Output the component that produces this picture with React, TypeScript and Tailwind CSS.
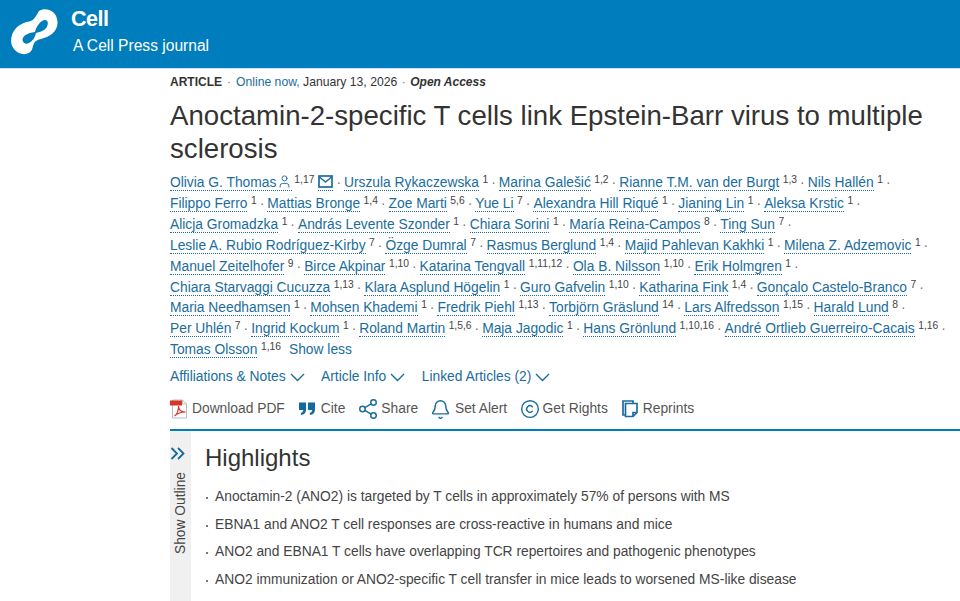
import { Share2, Bell, Copyright, User } from "lucide-react"

type Author = [string, string]

const authorLines: Author[][] = [
  [["Urszula Rykaczewska", "1"], ["Marina Galešić", "1,2"], ["Rianne T.M. van der Burgt", "1,3"], ["Nils Hallén", "1"]],
  [["Filippo Ferro", "1"], ["Mattias Bronge", "1,4"], ["Zoe Marti", "5,6"], ["Yue Li", "7"], ["Alexandra Hill Riqué", "1"], ["Jianing Lin", "1"], ["Aleksa Krstic", "1"]],
  [["Alicja Gromadzka", "1"], ["András Levente Szonder", "1"], ["Chiara Sorini", "1"], ["María Reina-Campos", "8"], ["Ting Sun", "7"]],
  [["Leslie A. Rubio Rodríguez-Kirby", "7"], ["Özge Dumral", "7"], ["Rasmus Berglund", "1,4"], ["Majid Pahlevan Kakhki", "1"], ["Milena Z. Adzemovic", "1"]],
  [["Manuel Zeitelhofer", "9"], ["Birce Akpinar", "1,10"], ["Katarina Tengvall", "1,11,12"], ["Ola B. Nilsson", "1,10"], ["Erik Holmgren", "1"]],
  [["Chiara Starvaggi Cucuzza", "1,13"], ["Klara Asplund Högelin", "1"], ["Guro Gafvelin", "1,10"], ["Katharina Fink", "1,4"], ["Gonçalo Castelo-Branco", "7"]],
  [["Maria Needhamsen", "1"], ["Mohsen Khademi", "1"], ["Fredrik Piehl", "1,13"], ["Torbjörn Gräslund", "14"], ["Lars Alfredsson", "1,15"], ["Harald Lund", "8"]],
  [["Per Uhlén", "7"], ["Ingrid Kockum", "1"], ["Roland Martin", "1,5,6"], ["Maja Jagodic", "1"], ["Hans Grönlund", "1,10,16"], ["André Ortlieb Guerreiro-Cacais", "1,16"]],
]

const highlights = [
  "Anoctamin-2 (ANO2) is targeted by T cells in approximately 57% of persons with MS",
  "EBNA1 and ANO2 T cell responses are cross-reactive in humans and mice",
  "ANO2 and EBNA1 T cells have overlapping TCR repertoires and pathogenic phenotypes",
  "ANO2 immunization or ANO2-specific T cell transfer in mice leads to worsened MS-like disease",
]

function Name({ children }: { children: React.ReactNode }) {
  return <span className="border-b border-dotted border-[#1a6d9c] text-[#1a6d9c]">{children}</span>
}

function Sup({ children }: { children: React.ReactNode }) {
  return <span className="relative -top-[4px] ml-[3.500px] text-[10.300px] leading-[0] text-[#444]">{children}</span>
}

function Dot() {
  return <span className="mx-[3px] text-[#777]">·</span>
}

function Chevron() {
  return (
    <svg width="15" height="9" viewBox="0 0 15 9" className="ml-[4px] shrink-0" fill="none" stroke="#1a6d9c" strokeWidth="1.400">
      <path d="M1 1l6.500 6.500L14 1" />
    </svg>
  )
}

function CellLogo() {
  return (
    <svg width="48" height="48" viewBox="0 0 48 48" className="mb-[5px] shrink-0">
      <path
        fill="#fff"
        fillRule="evenodd"
        d="M28 3C34-1 46 2 46.500 14 47 24 38 29 30 31 24 32.500 23 34 21.500 40 20 46 13 47.500 8 45 2 42-1 36 .5 29 2 21 9 15 18 13.500 23 12.700 25 8 28 3ZM34 12C37 12 37.500 15.500 36 18.500 34 22.500 30 23.800 25 25 24 29.500 21.500 33.500 17.500 35.300 14.500 36.500 11.500 34.800 11.500 31.500 12 28 16 25 24 24 25 19 29.500 12 34 12Z"
      />
    </svg>
  )
}

function MailIcon() {
  return (
    <svg width="15" height="13" viewBox="0 0 15 13" className="inline align-[-1px]" fill="none" stroke="#1a6d9c" strokeWidth="1.700">
      <rect x="1" y="1" width="13" height="11" />
      <path d="M1.500 2l6 5 6-5" strokeWidth="1.400" />
    </svg>
  )
}

function PdfIcon() {
  return (
    <svg width="18" height="20" viewBox="0 0 18 20" className="shrink-0">
      <path d="M2.500 1h10l4 4v14h-14z" fill="#fff" stroke="#bbb" />
      <path d="M12.500 1v4h4" fill="none" stroke="#bbb" />
      <rect x="0" y="1.500" width="12" height="5" fill="#d8352a" />
      <path d="M4.500 17c3-2 4-6 4-10 0 4 2 6 7 6-4 0-8 1-11 4z" fill="none" stroke="#d8352a" strokeWidth="1.100" />
    </svg>
  )
}

function QuoteIcon() {
  return (
    <svg width="16" height="14" viewBox="0 0 17 14" className="shrink-0" fill="#136a9e">
      <path d="M0 0h7.500v7.500C7.500 11 5.500 13 2 13.500v-2.500c1.500-.3 2.500-1.200 2.500-3H0zM9.500 0H17v7.500c0 3.500-2 5.500-5.500 6v-2.500c1.500-.3 2.500-1.200 2.500-3H9.500z" />
    </svg>
  )
}

function ReprintsIcon() {
  return (
    <svg width="16" height="18" viewBox="0 0 16 18" className="shrink-0" fill="none" stroke="#1a6d9c" strokeWidth="1.700">
      <path d="M3 15H1V1h10v2" />
      <path d="M3.500 3.500H15v9l-4 4H3.500zM15 12.500h-4v4" />
    </svg>
  )
}

function Tool({ icon, label, className }: { icon: React.ReactNode; label: string; className: string }) {
  return (
    <div className={`flex items-center ${className}`}>
      {icon}
      <span>{label}</span>
    </div>
  )
}

export default function App() {
  return (
    <div className="h-[601px] w-[960px] overflow-hidden bg-white font-['Liberation_Sans',Arial,sans-serif]">
      <header className="flex h-[69px] items-center border-b border-[#cfe3ef] bg-[#007dbc] pl-[11px] text-white">
        <CellLogo />
        <div className="ml-[12px] pb-[7px]">
          <div className="text-[21.500px] font-bold leading-[26px] tracking-[-0.5px]">Cell</div>
          <div className="mt-[4px] pl-[2px] text-[15.600px] leading-[20px]">A Cell Press journal</div>
        </div>
      </header>

      <main className="pl-[170px]">
        <div className="mt-[5px] text-[12px] leading-[16px] text-[#333]">
          <span className="font-bold">ARTICLE</span>
          <span className="mx-[5px] text-[#777]">·</span>
          <span className="text-[12.200px]">
            <span className="text-[#1a6d9c]">Online now,</span> January 13, 2026
          </span>
          <span className="mx-[4.500px] text-[#777]">·</span>
          <span className="font-bold italic">Open Access</span>
        </div>

        <h1 className="mt-[10px] w-[770px] text-[27.630px] leading-[32.500px] text-[#333]">
          Anoctamin-2-specific T cells link Epstein-Barr virus to multiple sclerosis
        </h1>

        <div className="mt-[8px] w-[790px] whitespace-nowrap text-[13.800px] leading-[20.900px]">
          <div>
            <span className="border-b border-dotted border-[#1a6d9c] text-[#1a6d9c]">
              Olivia G. Thomas
              <User size={15} strokeWidth={1.5} className="ml-[1px] inline align-[-2px]" />
            </span>
            <span className="relative -top-[4px] ml-[2px] text-[10.300px] leading-[0] text-[#444]">1,17</span>
            <span className="ml-[4px] border-b border-dotted border-[#1a6d9c]">
              <MailIcon />
            </span>
            <Dot />
            {authorLines[0].map(([name, sup]) => (
              <span key={name}>
                <Name>{name}</Name>
                <Sup>{sup}</Sup>
                <Dot />
              </span>
            ))}
          </div>
          {authorLines.slice(1).map((line, n) => (
            <div key={n}>
              {line.map(([name, sup]) => (
                <span key={name}>
                  <Name>{name}</Name>
                  <Sup>{sup}</Sup>
                  <Dot />
                </span>
              ))}
            </div>
          ))}
          <div>
            <Name>Tomas Olsson</Name>
            <Sup>1,16</Sup>
            <span className="ml-[8px] text-[#1a6d9c]">Show less</span>
          </div>
        </div>

        <div className="mt-[6px] flex gap-[16.500px] text-[13.800px] leading-[20px] text-[#1a6d9c]">
          <div className="flex items-center">Affiliations &amp; Notes<Chevron /></div>
          <div className="flex items-center">Article Info<Chevron /></div>
          <div className="flex items-center">Linked Articles (2)<Chevron /></div>
        </div>

        <div className="mt-[12px] flex h-[20px] text-[13.800px] leading-[20px] text-[#555]">
          <Tool className="mr-[14px] gap-[4px]" icon={<PdfIcon />} label="Download PDF" />
          <Tool className="mr-[11.500px] gap-[6px]" icon={<QuoteIcon />} label="Cite" />
          <Tool className="mr-[11.400px] gap-[2.500px]" icon={<Share2 size={22} strokeWidth={1.6} className="text-[#1a6d9c]" />} label="Share" />
          <Tool className="mr-[12.500px] gap-[4.400px]" icon={<Bell size={21} strokeWidth={1.7} className="text-[#1a6d9c]" />} label="Set Alert" />
          <Tool className="mr-[14px] gap-[3px]" icon={<Copyright size={20} strokeWidth={1.7} className="text-[#1a6d9c]" />} label="Get Rights" />
          <Tool className="gap-[5px]" icon={<ReprintsIcon />} label="Reprints" />
        </div>

        <div className="mt-[10px] flex h-[180px] border-t-2 border-[#007dbc]">
          <aside className="flex w-[21px] flex-col items-start bg-[#f0f0f0] pt-[16px]">
            <svg width="15" height="13" viewBox="0 0 15 13" fill="none" stroke="#136a9e" strokeWidth="1.800" className="shrink-0">
              <path d="M1.500 1l5.500 5.500L1.500 12M8 1l5.500 5.500L8 12" />
            </svg>
            <span className="ml-[1.500px] mt-[11.500px] rotate-180 text-[13.800px] leading-[18px] text-[#444] [writing-mode:vertical-rl]">Show Outline</span>
          </aside>
          <section className="pl-[14px] pt-[12px]">
            <h2 className="text-[24px] leading-[30px] text-[#333]">Highlights</h2>
            <ul className="mt-[14px] text-[13.800px] leading-[20px] text-[#444]">
              {highlights.map((h) => (
                <li key={h} className="mb-[7.600px] flex">
                  <span className="ml-[1px] mr-[7px] mt-[10px] h-[2px] w-[2px] shrink-0 bg-[#777]" />
                  <span>{h}</span>
                </li>
              ))}
            </ul>
          </section>
        </div>
      </main>
    </div>
  )
}
